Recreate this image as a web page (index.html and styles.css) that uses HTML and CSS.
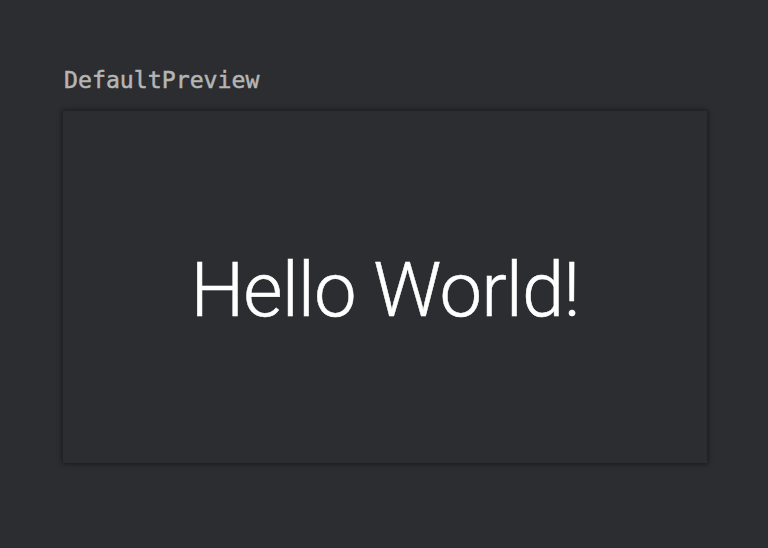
FILE: index.html
```html
<!DOCTYPE html>
<html>
<head>
<meta charset="utf-8">
<link rel="stylesheet" href="styles.css">
</head>
<body>
<div class="page">
  <div class="label">DefaultPreview</div>
  <div class="card">
    <div class="hello">Hello World!</div>
  </div>
</div>
</body>
</html>
```
FILE: styles.css
```css
html, body {
  margin: 0;
  padding: 0;
  background: #2b2d30;
  width: 768px;
  height: 548px;
  overflow: hidden;
}
.page {
  padding: 64px 0 0 63px;
  display: flex;
  flex-direction: column;
}
.label {
  font-family: "DejaVu Sans Mono", monospace;
  font-size: 23.2px;
  font-weight: 400;
  -webkit-text-stroke: 0.5px #b5b5b5;
  color: #b5b5b5;
  line-height: 32px;
  margin-left: 1px;
}
.card {
  margin-top: 15px;
  width: 644px;
  height: 352px;
  background: #2b2d30;
  box-shadow: 0 0 5px 1px rgba(0, 0, 0, 0.45);
  display: flex;
  align-items: center;
  justify-content: center;
}
.hello {
  font-family: "Roboto", sans-serif;
  font-weight: 300;
  font-size: 76px;
  letter-spacing: -0.9px;
  -webkit-text-stroke: 0.5px #ffffff;
  color: #ffffff;
  line-height: 1;
  margin-top: 6px;
}
```
